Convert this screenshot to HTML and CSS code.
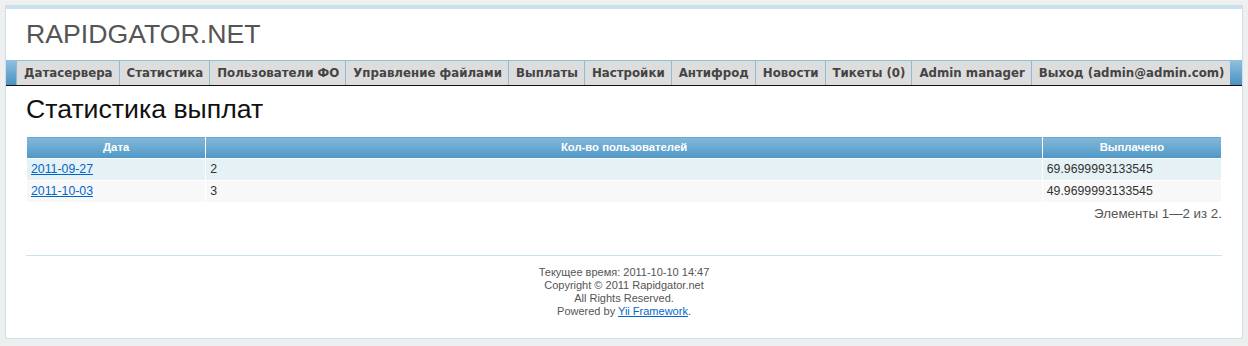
FILE: index.html
```html
<!DOCTYPE html>
<html lang="ru">
<head>
    <meta charset="UTF-8">
    <title>Rapidgator.net - Статистика выплат</title>
    <link rel="stylesheet" href="styles.css">
</head>
<body>
<div id="page">
    <div id="header">
        <div id="logo">RAPIDGATOR.NET</div>
    </div>
    <div id="mainmenu">
        <ul>
            <li><a href="#">Датасервера</a></li>
            <li><a href="#">Статистика</a></li>
            <li><a href="#">Пользователи ФО</a></li>
            <li><a href="#">Управление файлами</a></li>
            <li><a href="#">Выплаты</a></li>
            <li><a href="#">Настройки</a></li>
            <li><a href="#">Антифрод</a></li>
            <li><a href="#">Новости</a></li>
            <li><a href="#">Тикеты (0)</a></li>
            <li><a href="#">Admin manager</a></li>
            <li><a href="#">Выход (admin@admin.com)</a></li>
        </ul>
    </div>
    <div id="content">
        <h1>Статистика выплат</h1>
        <div class="grid-view">
            <table class="items">
                <thead>
                    <tr>
                        <th class="col-date">Дата</th>
                        <th>Кол-во пользователей</th>
                        <th class="col-sum">Выплачено</th>
                    </tr>
                </thead>
                <tbody>
                    <tr class="odd">
                        <td><a href="#">2011-09-27</a></td>
                        <td>2</td>
                        <td>69.9699993133545</td>
                    </tr>
                    <tr class="even">
                        <td><a href="#">2011-10-03</a></td>
                        <td>3</td>
                        <td>49.9699993133545</td>
                    </tr>
                </tbody>
            </table>
            <div class="summary">Элементы 1—2 из 2.</div>
        </div>
    </div>
    <div id="footer">
        Текущее время: 2011-10-10 14:47<br>
        Copyright &copy; 2011 Rapidgator.net<br>
        All Rights Reserved.<br>
        Powered by <a href="#">Yii Framework</a>.
    </div>
</div>
</body>
</html>
```

FILE: styles.css
```css
body {
    margin: 0;
    padding: 0;
    color: #555;
    font: normal 13.33px "Liberation Sans", Arial, sans-serif;
    background: #efefef;
}
#page {
    margin: 5px;
    background: white;
    border: 1px solid #c9e0ed;
}
#header {
    border-top: 3px solid #c9e0ed;
}
#logo {
    padding: 10px 20px;
    font-size: 26.67px;
    line-height: 31px;
}
#mainmenu {
    padding: 1px 10px 0;
    background: linear-gradient(#8fc1de, #4b91c2);
    border-bottom: 1px solid #111;
}
#mainmenu ul {
    display: flex;
    margin: 0;
    padding: 0;
    list-style: none;
}
#mainmenu li {
    flex-shrink: 0;
}
#mainmenu li a {
    display: block;
    height: 24px;
    line-height: 24px;
    padding: 0 6px 0 7px;
    background: #dddddd;
    border-left: 1px solid #8dbbd9;
    color: #444;
    font-family: "DejaVu Sans", Verdana, sans-serif;
    font-size: 11.8px;
    font-weight: bold;
    text-decoration: none;
    white-space: nowrap;
}
#content {
    padding: 8px 20px 0;
}
h1 {
    margin: 0;
    color: #111;
    font-size: 26.67px;
    font-weight: normal;
    line-height: 30px;
}
.grid-view {
    padding-top: 12px;
}
table.items {
    width: 100%;
    border-collapse: collapse;
    background: white;
}
table.items th,
table.items td {
    border: 1px solid white;
    padding: 3px 4px;
    font-size: 12.3px;
    line-height: 15px;
}
table.items th {
    color: white;
    text-align: center;
    font-size: 11.3px;
    font-weight: bold;
    background: linear-gradient(#84b9d9, #4f97c6);
}
table.items .col-date,
table.items .col-sum {
    width: 15%;
}
table.items tr.odd {
    background: #e5f1f4;
}
table.items tr.even {
    background: #f8f8f8;
}
table.items td {
    color: #333;
}
a {
    color: #06c;
}
.summary {
    margin-top: 3px;
    text-align: right;
    line-height: 16px;
}
#footer {
    margin: 33px 20px 10px;
    padding: 10px;
    border-top: 1px solid #c9e0ed;
    text-align: center;
    font-size: 11px;
    line-height: 13px;
}
```
